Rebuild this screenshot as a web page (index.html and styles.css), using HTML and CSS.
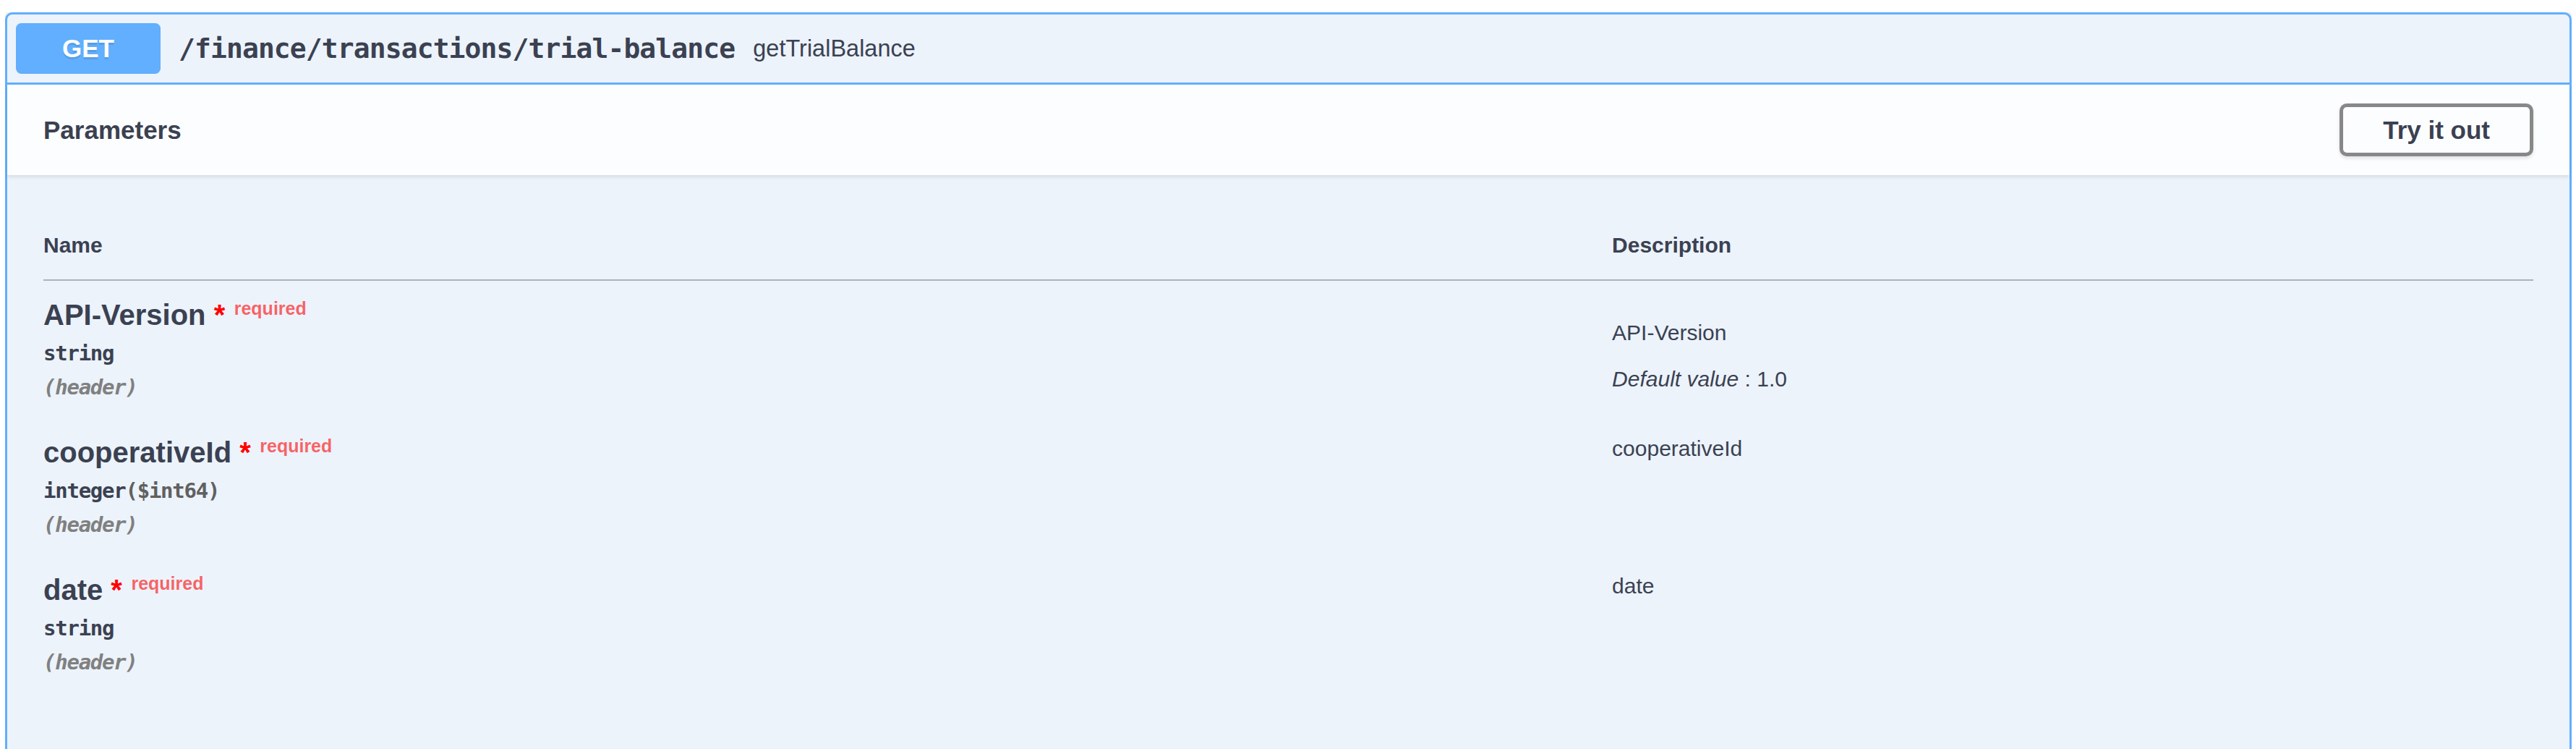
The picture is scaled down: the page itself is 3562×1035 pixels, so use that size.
FILE: index.html
```html
<!DOCTYPE html>
<html lang="en">
<head>
<meta charset="utf-8">
<title>getTrialBalance</title>
<link rel="stylesheet" href="styles.css">
</head>
<body>
<div class="opblock">
  <div class="summary">
    <span class="method">GET</span>
    <span class="path">/finance/transactions/trial-balance</span>
    <span class="opid">getTrialBalance</span>
  </div>
  <div class="body">
    <div class="section-header">
      <h4 class="title">Parameters</h4>
      <button class="try-out">Try it out</button>
    </div>
    <div class="table-container">
      <table class="parameters">
        <thead>
          <tr>
            <th class="col-name">Name</th>
            <th class="col-desc">Description</th>
          </tr>
        </thead>
        <tbody>
          <tr>
            <td class="cell-name">
              <div class="param-name">API-Version<span class="star">&nbsp;*</span><span class="req">required</span></div>
              <div class="param-type">string</div>
              <div class="param-in">(header)</div>
            </td>
            <td class="cell-desc">
              <p class="md md-spaced">API-Version</p>
              <p class="md md-last"><i>Default value</i> : 1.0</p>
            </td>
          </tr>
          <tr>
            <td class="cell-name">
              <div class="param-name">cooperativeId<span class="star">&nbsp;*</span><span class="req">required</span></div>
              <div class="param-type">integer<span class="fmt">($int64)</span></div>
              <div class="param-in">(header)</div>
            </td>
            <td class="cell-desc">
              <p class="md">cooperativeId</p>
            </td>
          </tr>
          <tr>
            <td class="cell-name">
              <div class="param-name">date<span class="star">&nbsp;*</span><span class="req">required</span></div>
              <div class="param-type">string</div>
              <div class="param-in">(header)</div>
            </td>
            <td class="cell-desc">
              <p class="md">date</p>
            </td>
          </tr>
        </tbody>
      </table>
    </div>
  </div>
</div>
</body>
</html>
```

FILE: styles.css
```css
html, body {
  background: #ffffff;
}

body {
  margin: 17px 6px 0 7px;
  font-family: "Liberation Sans", Arial, sans-serif;
  color: #3b4151;
  overflow: hidden;
}

.opblock {
  border: 3px solid #61affe;
  border-radius: 10px;
  background: #ecf3fb;
  box-shadow: 0 0 7.5px rgba(0, 0, 0, 0.19);
  min-height: 1200px;
}

.summary {
  display: flex;
  align-items: center;
  padding: 12px;
  border-bottom: 3px solid #61affe;
}

.method {
  min-width: 200px;
  padding: 15px 0;
  font-size: 35px;
  line-height: 40px;
  font-weight: 700;
  text-align: center;
  color: #fff;
  background: #61affe;
  border-radius: 7.5px;
  text-shadow: 0 2.5px 0 rgba(0, 0, 0, 0.1);
}

.path {
  padding: 0 25px;
  font-family: "DejaVu Sans Mono", "Liberation Mono", monospace;
  font-weight: 700;
  font-size: 38px;
  letter-spacing: -0.9px;
  color: #3b4151;
}

.opid {
  font-size: 32.5px;
  color: #3b4151;
}

.section-header {
  display: flex;
  align-items: center;
  box-sizing: border-box;
  min-height: 125px;
  padding: 20px 50px;
  background: #fcfdff;
  box-shadow: 0 2.5px 5px rgba(0, 0, 0, 0.1);
}

.title {
  flex: 1;
  margin: 0;
  font-size: 35px;
  font-weight: 700;
  color: #3b4151;
}

.try-out {
  font-family: "Liberation Sans", Arial, sans-serif;
  font-size: 35px;
  line-height: 38px;
  font-weight: 700;
  color: #3b4151;
  padding: 12.5px 55px;
  border: 5px solid #888888;
  border-radius: 10px;
  background: transparent;
  box-shadow: 0 2.5px 5px rgba(0, 0, 0, 0.1);
}

.table-container {
  padding: 50px;
}

.parameters {
  width: 100%;
  border-collapse: collapse;
}

.parameters th {
  text-align: left;
  font-size: 30px;
  font-weight: 700;
  padding: 30px 0;
  border-bottom: 2px solid rgba(59, 65, 81, 0.2);
  color: #3b4151;
}

.col-name {
  width: 63%;
}

.parameters td {
  vertical-align: top;
  padding: 25px 0;
}

.param-name {
  font-size: 40px;
  font-weight: 700;
  color: #3b4151;
}

.star {
  color: red;
}

.req {
  position: relative;
  top: -15px;
  padding: 12.5px;
  font-size: 25px;
  color: rgba(255, 0, 0, 0.6);
}

.param-type {
  padding: 12.5px 0;
  font-family: "DejaVu Sans Mono", "Liberation Mono", monospace;
  font-size: 29px;
  line-height: 35px;
  letter-spacing: -1.25px;
  font-weight: 700;
  color: #3b4151;
}

.fmt {
  color: #606060;
}

.param-in {
  font-family: "DejaVu Sans Mono", "Liberation Mono", monospace;
  font-size: 29px;
  line-height: 35px;
  letter-spacing: -1.25px;
  font-style: italic;
  font-weight: 700;
  color: #808080;
}

.md {
  margin: 0;
  font-size: 30px;
  color: #3b4151;
}

.md-spaced {
  margin: 30px 0;
}

.md-last {
  margin: 0;
}
```
